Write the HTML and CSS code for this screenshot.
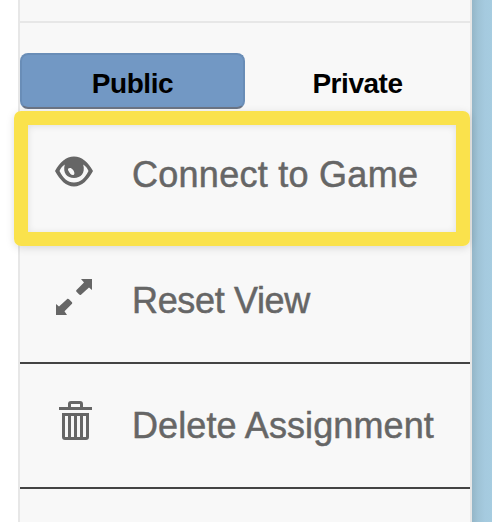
FILE: index.html
```html
<!DOCTYPE html>
<html lang="en">
<head>
<meta charset="utf-8">
<title>Assignment</title>
<link rel="stylesheet" href="styles.css">
</head>
<body>
<div class="page">
  <div class="panel">
    <div class="header"></div>
    <div class="tabs">
      <div class="tab active"><span class="public">Public</span></div>
      <div class="tab"><span class="private">Private</span></div>
    </div>
    <div class="menu">
      <div class="row first">
        <svg class="icon" viewBox="0 0 40 40"><path fill-rule="evenodd" d="M1 20C6 11 12 5.500 20 5.500S34 11 39 20C34 29 28 35.500 20 35.500S6 29 1 20ZM10.800 13.500C8 15.500 6.500 17.500 5.500 20C9 27 13.500 31.500 20 31.500S31 27 34.500 20C33.500 17.500 32 15.500 29.200 13.500C31.500 22 27 27 20 27S8.500 22 10.800 13.500ZM14 19C15.500 22.500 17.500 24.500 19.500 24C21.500 23 20 19 17.500 17.500C15.500 16.500 13.500 17.500 14 19Z"/></svg>
        <span>Connect to Game</span>
      </div>
      <div class="row">
        <svg class="icon" viewBox="0 0 40 40"><path d="M27 2H38V13L35 10.500 27 17.700Q26 18.200 25.200 17.500L22.300 14.500Q21.800 13.700 22.500 13L30 5.500ZM2 27L5 29.500 13.500 21.800Q14.300 21.500 15 22.200L18 25.300Q18.500 26 18 26.700L10.500 34.200 13 38H2Z"/></svg>
        <span class="reset">Reset View</span>
      </div>
      <div class="row">
        <svg class="icon" viewBox="0 0 40 40"><path fill-rule="evenodd" d="M5 5H14V2Q14 -1 17 -1H26Q29 -1 29 2V5H38V8H5ZM17 2V5H26V2ZM8 11H35V35Q35 38 32 38H11Q8 38 8 35ZM11 14V35H14V14ZM17 14V35H20V14ZM23 14V35H26V14ZM29 14V35H32V14Z"/></svg>
        <span class="delete">Delete Assignment</span>
      </div>
    </div>
  </div>
  <div class="board"></div>
  <div class="highlight"></div>
</div>
</body>
</html>
```
FILE: styles.css
```css
* { box-sizing: border-box; }
body {
  margin: 0;
  background: #fff;
  font-family: "Liberation Sans", Arial, sans-serif;
}
.page {
  position: relative;
  display: flex;
  height: 522px;
  padding-left: 18px;
  overflow: hidden;
}
.panel {
  width: 454px;
  flex: none;
  background: #f8f8f8;
  border: solid #e7e7e7;
  border-width: 0 2px;
}
.board {
  flex: 1;
  background: linear-gradient(to right, #94b6c8 0, #9fc3d6 6px, #a5cadf 13px, #a6cce0 20px);
}
.header {
  height: 23px;
  border-bottom: 2px solid #e7e7e7;
}
.tabs {
  display: flex;
  margin-top: 30px;
  height: 56px;
}
.tab {
  width: 225px;
  height: 56px;
  border-radius: 8px;
  text-align: center;
  font-size: 28px;
  font-weight: bold;
  line-height: 62px;
  letter-spacing: -.45px;
  color: #000;
}
.active {
  background: #7298c4;
  border: 2px solid #698db7;
  border-bottom-color: #6c7585;
  line-height: 58px;
}
.menu { margin-top: 5px; }
.row {
  display: flex;
  align-items: flex-start;
  height: 125px;
  padding: 38px 0 0 34px;
  border-bottom: 2px solid #444;
  font-size: 36px;
  line-height: 48px;
  letter-spacing: .27px;
  color: #666;
  white-space: nowrap;
  -webkit-text-stroke: .5px #666;
}
.first { padding-top: 37px; }
.reset { letter-spacing: -.35px; }
.delete { letter-spacing: .1px; }
.icon {
  width: 40px;
  height: 40px;
  margin-right: 38px;
  flex: none;
  fill: #666;
  overflow: visible;
}
.highlight {
  position: absolute;
  left: 14px;
  top: 111px;
  width: 456px;
  height: 135px;
  border: 14px solid #fae24c;
  border-radius: 7px;
  box-shadow: 0 2px 8px rgba(0,0,0,.13), inset 0 1px 7px rgba(0,0,0,.1);
}
```
